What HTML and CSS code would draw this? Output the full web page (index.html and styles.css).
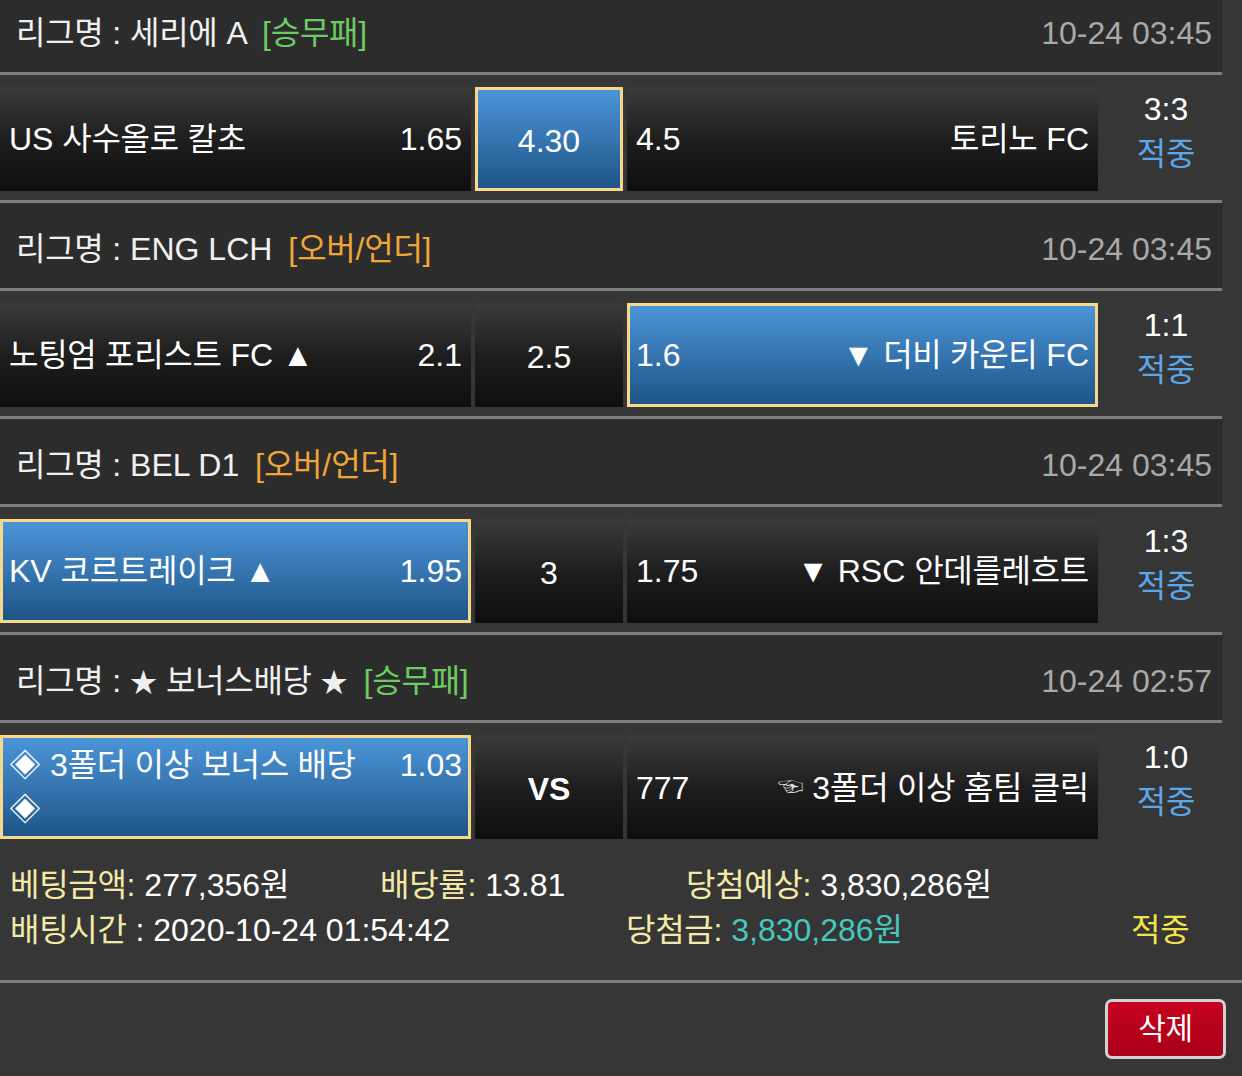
FILE: index.html
```html
<!DOCTYPE html>
<html lang="ko">
<head>
<meta charset="utf-8">
<title>배팅내역</title>
<link rel="stylesheet" href="styles.css">
</head>
<body>
<div class="list">
  <section class="match">
    <div class="league">
      <div class="league-name"><span class="k">리그명</span> : <span class="k">세리에</span> A <span class="tag tag-green">[<span class="k">승무패</span>]</span></div>
      <div class="date">10-24 03:45</div>
    </div>
    <div class="bet-row">
      <div class="cell home"><div class="line"><span class="team">US <span class="k">사수올로 칼초</span></span><span class="odd">1.65</span></div></div>
      <div class="cell draw selected">4.30</div>
      <div class="cell away"><div class="line"><span class="odd">4.5</span><span class="team"><span class="k">토리노</span> FC</span></div></div>
      <div class="result"><div class="score">3:3</div><div class="status k">적중</div></div>
    </div>
  </section>

  <section class="match">
    <div class="league">
      <div class="league-name"><span class="k">리그명</span> : ENG LCH <span class="tag tag-orange">[<span class="k">오버</span>/<span class="k">언더</span>]</span></div>
      <div class="date">10-24 03:45</div>
    </div>
    <div class="bet-row">
      <div class="cell home"><div class="line"><span class="team"><span class="k">노팅엄 포리스트</span> FC ▲</span><span class="odd">2.1</span></div></div>
      <div class="cell draw">2.5</div>
      <div class="cell away selected"><div class="line"><span class="odd">1.6</span><span class="team">▼ <span class="k">더비 카운티</span> FC</span></div></div>
      <div class="result"><div class="score">1:1</div><div class="status k">적중</div></div>
    </div>
  </section>

  <section class="match">
    <div class="league">
      <div class="league-name"><span class="k">리그명</span> : BEL D1 <span class="tag tag-orange">[<span class="k">오버</span>/<span class="k">언더</span>]</span></div>
      <div class="date">10-24 03:45</div>
    </div>
    <div class="bet-row">
      <div class="cell home selected"><div class="line"><span class="team">KV <span class="k">코르트레이크</span> ▲</span><span class="odd">1.95</span></div></div>
      <div class="cell draw">3</div>
      <div class="cell away"><div class="line"><span class="odd">1.75</span><span class="team">▼ RSC <span class="k">안데를레흐트</span></span></div></div>
      <div class="result"><div class="score">1:3</div><div class="status k">적중</div></div>
    </div>
  </section>

  <section class="match">
    <div class="league">
      <div class="league-name"><span class="k">리그명</span> : <span class="star">★</span> <span class="k">보너스배당</span> <span class="star">★</span> <span class="tag tag-green">[<span class="k">승무패</span>]</span></div>
      <div class="date">10-24 02:57</div>
    </div>
    <div class="bet-row">
      <div class="cell home selected"><div class="line"><span class="team bonus">◈ 3<span class="k">폴더 이상 보너스 배당</span> ◈</span><span class="odd">1.03</span></div></div>
      <div class="cell draw vs">VS</div>
      <div class="cell away"><div class="line"><span class="odd">777</span><span class="team"><span class="hand">☜</span> 3<span class="k">폴더 이상 홈팀 클릭</span></span></div></div>
      <div class="result"><div class="score">1:0</div><div class="status k">적중</div></div>
    </div>
  </section>
</div>

<div class="summary">
  <div class="summary-line">
    <div class="col-a"><span class="label k">베팅금액</span><span class="label">:</span> 277,356<span class="k">원</span></div>
    <div class="col-b"><span class="label k">배당률</span><span class="label">:</span> 13.81</div>
    <div><span class="label k">당첨예상</span><span class="label">:</span> 3,830,286<span class="k">원</span></div>
  </div>
  <div class="summary-line">
    <div class="col-c"><span class="label k">배팅시간</span> : 2020-10-24 01:54:42</div>
    <div class="col-d"><span class="label k">당첨금</span><span class="label">:</span> <span class="win">3,830,286<span class="k">원</span></span></div>
    <div class="hit k">적중</div>
  </div>
</div>

<div class="actions">
  <button class="btn-delete" type="button"><span class="k">삭제</span></button>
</div>
</body>
</html>
```

FILE: styles.css
```css
* {
  box-sizing: border-box;
}

html,
body {
  margin: 0;
  padding: 0;
  background: #363636;
  overflow: hidden;
}

body {
  font-family: "Liberation Sans", "Noto Sans CJK KR", sans-serif;
  font-size: 32px;
  line-height: 1.2;
  color: #ffffff;
}

.k {
  letter-spacing: -0.3px;
}

.star {
  font-size: 27px;
}

.list {
  width: 1222px;
  margin-top: -13px;
}

.league {
  height: 88px;
  background: #2c2c2c;
  border-bottom: 3px solid #7e7e7e;
  display: flex;
  align-items: center;
  justify-content: space-between;
  padding: 8px 10px 0 16px;
  color: #f0f0f0;
}

.tag {
  margin-left: 7px;
}

.tag-green {
  color: #6ccb62;
}

.tag-orange {
  color: #f0a53a;
}

.date {
  color: #a9a9a9;
}

.bet-row {
  display: flex;
  gap: 4px;
  padding: 12px 0 9px;
  border-bottom: 3px solid #7e7e7e;
}

.match:last-child .bet-row {
  border-bottom: none;
}

.cell {
  height: 104px;
  display: flex;
  align-items: center;
  padding: 0 9px;
  background: linear-gradient(#3b3b3b 0%, #1e1e1e 50%, #0e0e0e 100%);
}

.home,
.away {
  width: 471px;
}

.draw {
  width: 148px;
  justify-content: center;
  padding-top: 4px;
}

.vs {
  font-weight: bold;
}

.selected {
  background: linear-gradient(#4b95d8 0%, #3675b0 50%, #1d5487 100%);
  border: 3px solid #f6d88c;
  padding: 0 6px;
}

.selected.draw {
  padding-top: 4px;
}

.line {
  width: 100%;
  display: flex;
  align-items: baseline;
  justify-content: space-between;
  line-height: 44px;
}

.bonus {
  max-width: 350px;
}

.hand {
  font-size: 26px;
  vertical-align: 3px;
  color: #dddddd;
}

.result {
  flex: 1;
  padding-left: 8px;
  text-align: center;
  line-height: 45px;
}

.score {
  color: #ffffff;
}

.status {
  color: #5aa8e8;
}

.summary {
  padding: 15px 0 27px 10px;
  border-bottom: 3px solid #7e7e7e;
  line-height: 45px;
}

.summary-line {
  display: flex;
}

.col-a {
  width: 370px;
}

.col-b {
  width: 306px;
}

.col-c {
  width: 616px;
}

.col-d {
  width: 505px;
}

.label {
  color: #f2eaa6;
}

.win {
  color: #45c8c0;
}

.hit {
  color: #f3e24a;
}

.actions {
  display: flex;
  justify-content: flex-end;
  padding: 16px 16px 0 0;
}

.btn-delete {
  width: 121px;
  height: 60px;
  background: linear-gradient(#c6021f, #a90019);
  border: 3px solid #d2d2d2;
  border-radius: 7px;
  color: #ffffff;
  font-family: "Liberation Sans", "Noto Sans CJK KR", sans-serif;
  font-size: 30px;
  padding: 0;
  line-height: 1;
}
```
